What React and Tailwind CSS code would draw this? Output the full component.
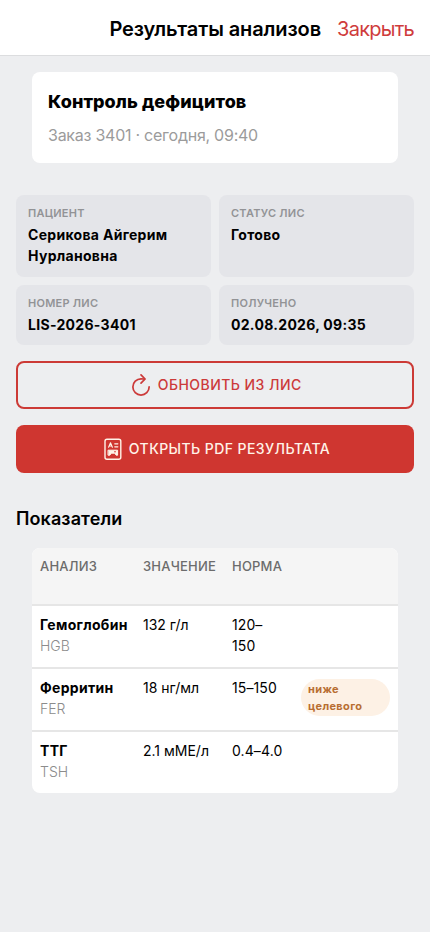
const info = [
  ['ПАЦИЕНТ', 'Серикова Айгерим Нурлановна'],
  ['СТАТУС ЛИС', 'Готово'],
  ['НОМЕР ЛИС', 'LIS-2026-3401'],
  ['ПОЛУЧЕНО', '02.08.2026, 09:35'],
];

const rows = [
  { name: 'Гемоглобин', code: 'HGB', value: '132 г/л', norm: ['120–', '150'] },
  { name: 'Ферритин', code: 'FER', value: '18 нг/мл', norm: ['15–150'], flag: true },
  { name: 'ТТГ', code: 'TSH', value: '2.1 мМЕ/л', norm: ['0.4–4.0'] },
];

function RefreshIcon() {
  return (
    <svg viewBox="0 0 512 512" className="size-[26px] shrink-0" fill="none" stroke="currentColor" strokeWidth="34" strokeLinecap="round">
      <path d="M320 146s24.36-12-64-12a160 160 0 10160 160" strokeMiterlimit="10" />
      <path d="M256 58l80 80-80 80" strokeLinejoin="round" />
    </svg>
  );
}

function ReportIcon() {
  return (
    <svg viewBox="0 0 26 26" className="size-[26px] shrink-0" fill="none" stroke="currentColor" strokeLinecap="round" strokeLinejoin="round">
      <rect x="5" y="3.2" width="15.8" height="20" rx="2" strokeWidth="1.4" />
      <path d="M8.6 11.2l1.9-4.4 1.9 4.4M9.3 10h2.4" strokeWidth="1.1" />
      <path d="M14.8 7.8h3M14.8 10.8h3" strokeWidth="1.3" />
      <path d="M8.4 14.2h9.2v5h-1.4l-1.5-2-3.4 0-1.5 2H8.4z" fill="currentColor" strokeWidth="1" />
      <circle cx="15" cy="15.7" r="0.8" className="fill-[#cf3630]" stroke="none" />
    </svg>
  );
}

export default function App() {
  return (
    <div className="min-h-[932px] w-full bg-[#edeef0] font-['Inter',sans-serif] text-black">
      <header className="flex h-14 items-center justify-end gap-4 border-b border-[#dcdddf] bg-white px-4 pt-[3px]">
        <h1 className="text-[20px] leading-6 font-semibold tracking-[-0.1px]">Результаты анализов</h1>
        <button className="text-[20px] leading-6 tracking-[-0.75px] text-[#cf3c3c]">Закрыть</button>
      </header>
      <main className="px-4 pt-4">
        <section className="mx-4 h-[91px] rounded-lg bg-white px-4 pt-[17px]">
          <h2 className="text-[18px] leading-[26px] font-extrabold tracking-[0.08px]">Контроль дефицитов</h2>
          <p className="mt-2 text-[16px] leading-6 tracking-[-0.25px] text-[#9b9b9b]">Заказ 3401 · сегодня, 09:40</p>
        </section>
        <section className="mt-8 grid grid-cols-2 grid-rows-[82px_60px] gap-2">
          {info.map(([label, value]) => (
            <div key={label} className="rounded-lg bg-[#e4e5e9] px-3 pt-[10px]">
              <div className="text-[11px] leading-4 font-semibold tracking-[0.25px] text-[#929396]">{label}</div>
              <div className="mt-[3px] text-[14px] leading-[21px] font-bold tracking-[0.3px]">{value}</div>
            </div>
          ))}
        </section>
        <button className="mt-4 flex h-12 w-full items-center justify-center gap-[3.5px] rounded-lg border-2 border-[#cc3a36] pb-px text-[14px] leading-5 font-medium tracking-[0.45px] text-[#cc3a3a]">
          <RefreshIcon />
          <span className="mt-px">ОБНОВИТЬ ИЗ ЛИС</span>
        </button>
        <button className="mt-4 flex h-12 w-full items-center justify-center gap-[3px] rounded-lg bg-[#cf3630] pb-px text-[14px] leading-5 font-medium tracking-[0.42px] text-[#fff3e8]">
          <ReportIcon />
          <span className="mt-px">ОТКРЫТЬ PDF РЕЗУЛЬТАТА</span>
        </button>
        <h2 className="mt-8 text-[18px] leading-7 font-semibold tracking-[0.1px]">Показатели</h2>
        <section className="mx-4 mt-[15px] overflow-hidden rounded-lg bg-white text-[14px] leading-[21px]">
          <div className="grid h-[56px] grid-cols-[103px_89px_69px_1fr] bg-[#f5f5f5] px-2 pt-2 text-[13px] leading-5 font-medium tracking-[0.2px] text-[#6c6c6c]">
            <span>АНАЛИЗ</span>
            <span>ЗНАЧЕНИЕ</span>
            <span>НОРМА</span>
          </div>
          {rows.map((r) => (
            <div key={r.code} className="grid h-[63px] grid-cols-[103px_89px_69px_1fr] border-t-2 border-[#e6e6e6] px-2 pt-2">
              <div>
                <div className="font-bold tracking-[0.3px]">{r.name}</div>
                <div className="font-light text-[#8c8c8c]">{r.code}</div>
              </div>
              <div>{r.value}</div>
              <div className="tracking-[0.1px]">
                {r.norm.map((n) => (
                  <div key={n}>{n}</div>
                ))}
              </div>
              {r.flag && (
                <div className="mt-[2px] h-[37px] rounded-full bg-[#fdf1e5] px-[7px] pt-[2px] text-[11px] leading-[16.5px] font-bold tracking-[0.35px] text-[#b86e32]">
                  ниже целевого
                </div>
              )}
            </div>
          ))}
        </section>
      </main>
    </div>
  );
}
